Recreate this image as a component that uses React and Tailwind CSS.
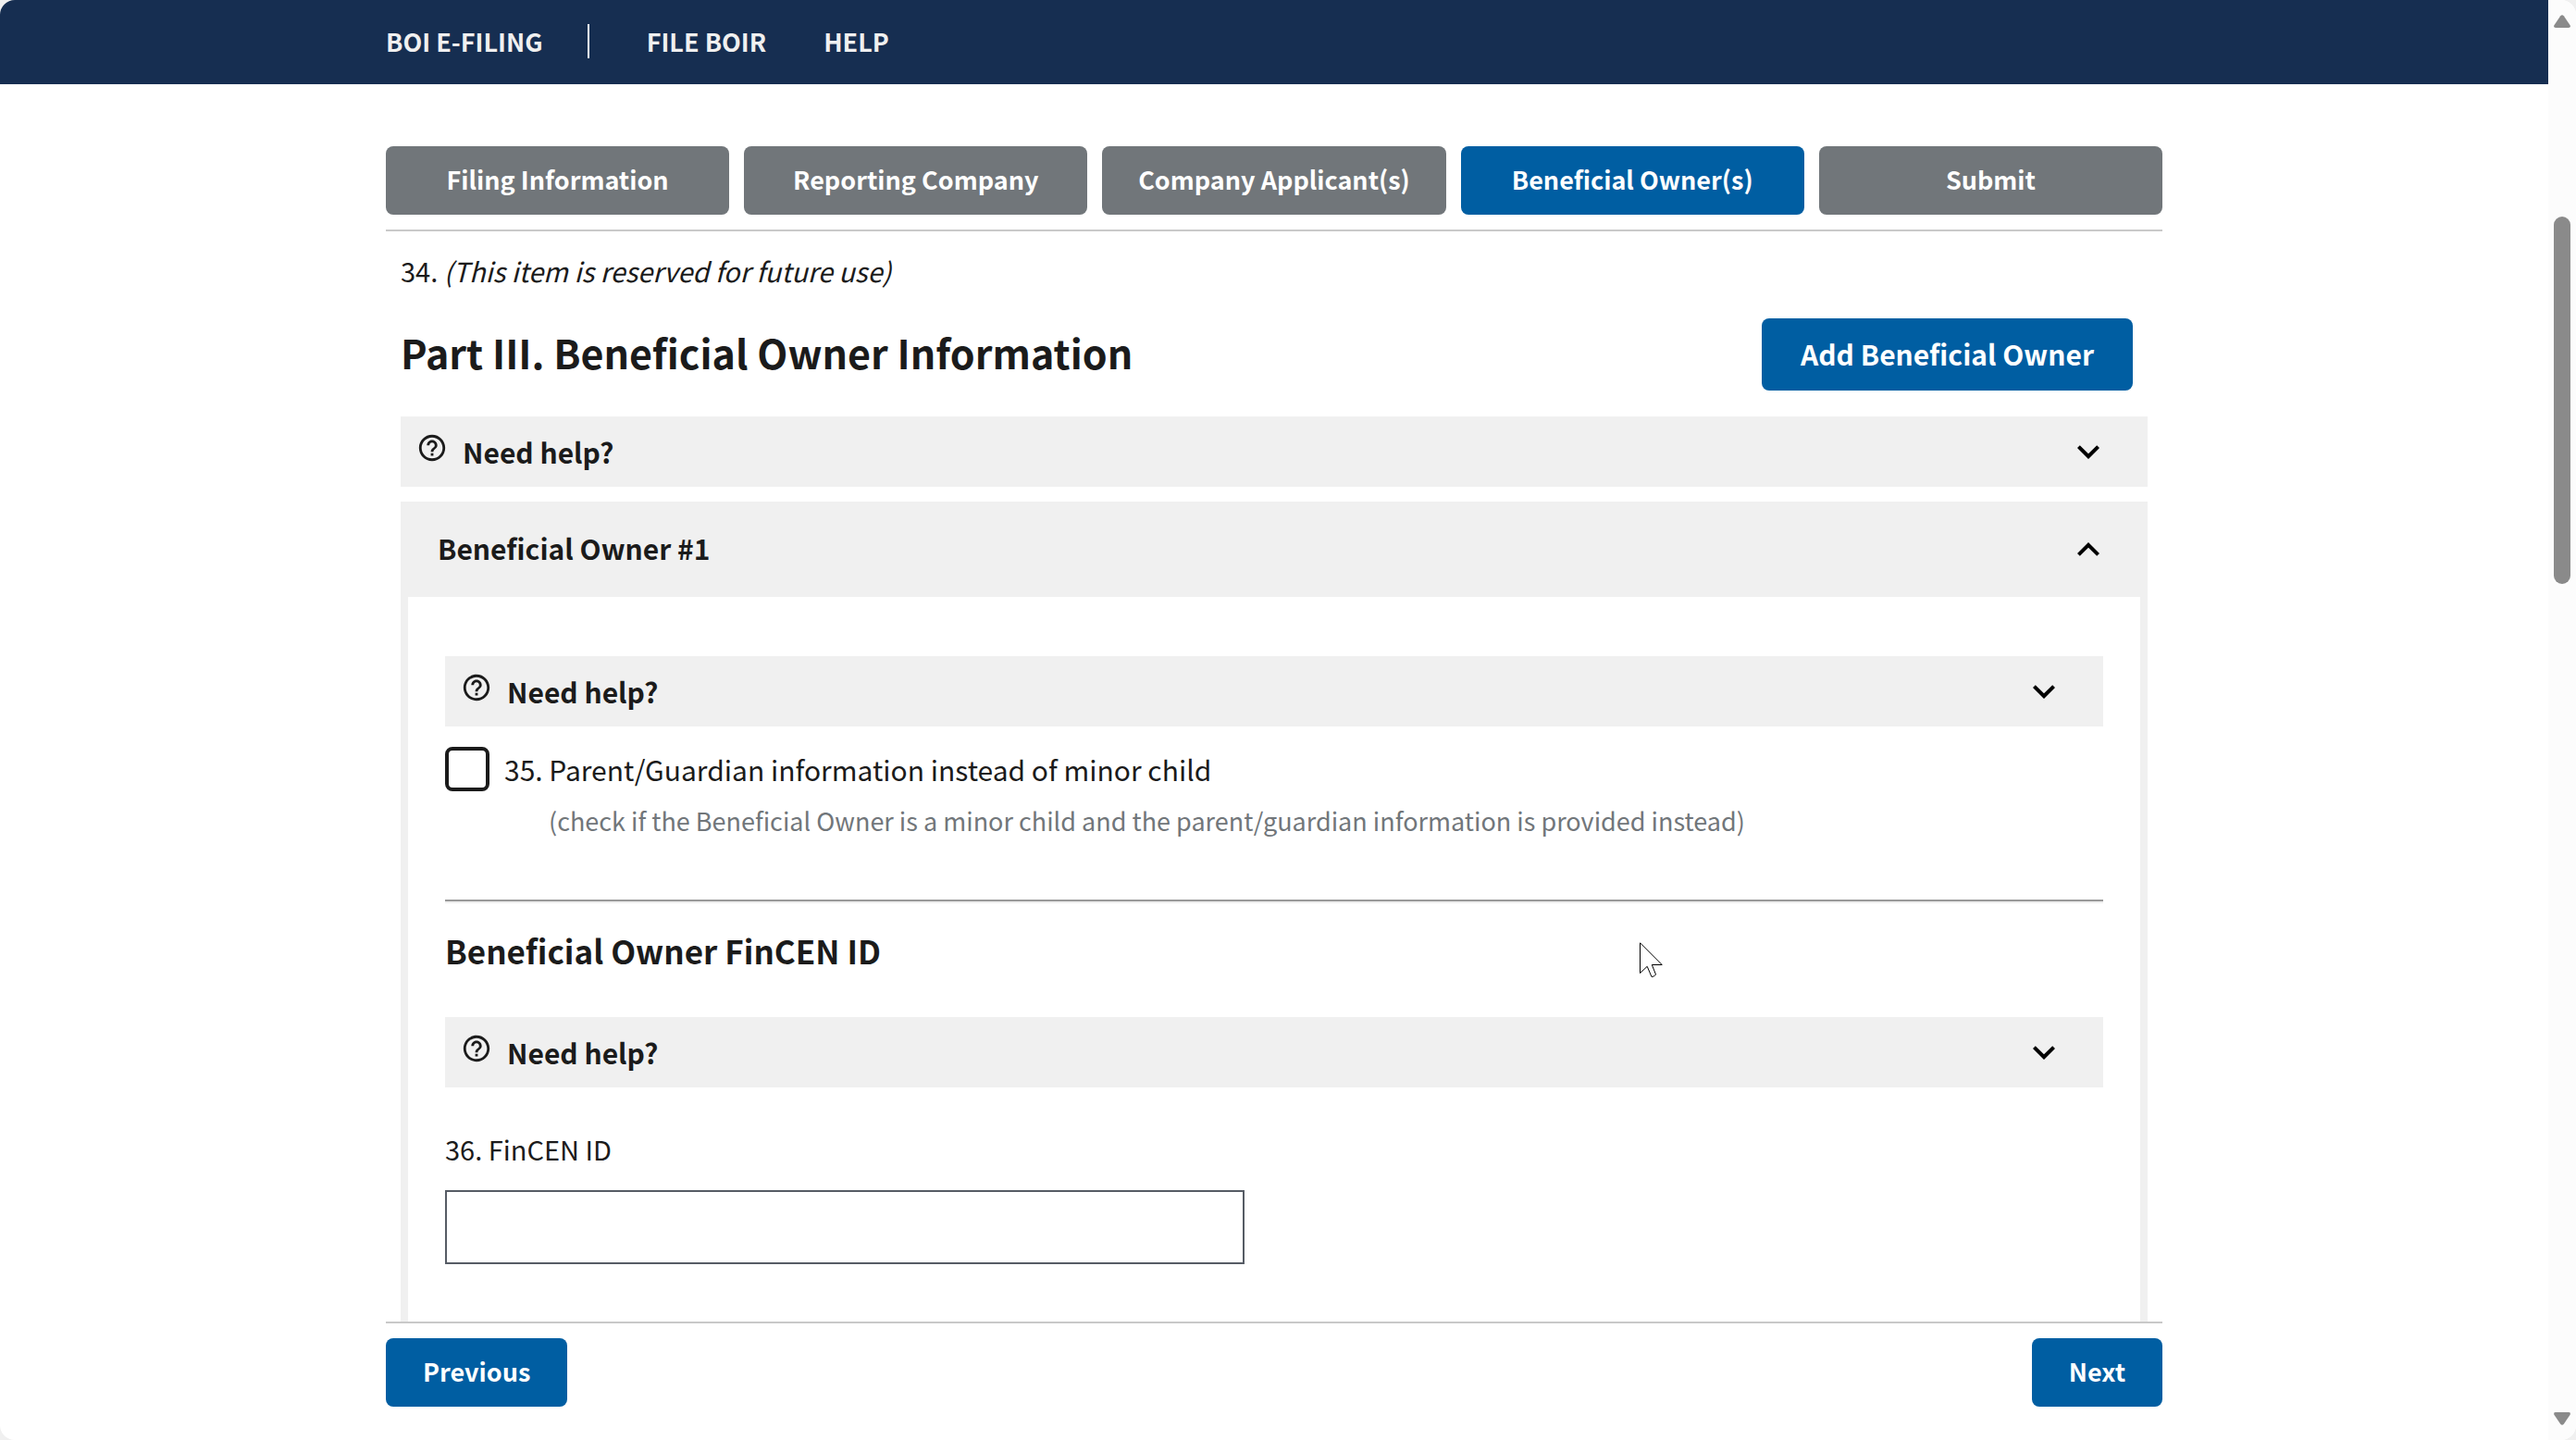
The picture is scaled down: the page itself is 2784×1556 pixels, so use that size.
import React, { useState } from 'react';
import { MdHelpOutline, MdExpandMore, MdExpandLess } from 'react-icons/md';

const steps = [
    'Filing Information',
    'Reporting Company',
    'Company Applicant(s)',
    'Beneficial Owner(s)',
    'Submit',
];

const NeedHelp = () => (
    <button type="button" className="flex h-[76px] w-full items-center gap-4 bg-[#f0f0f0] pl-[17px] pr-10 text-left">
        <MdHelpOutline className="mb-2 size-[34px] shrink-0" />
        <span className="flex-1 text-[30px] font-bold leading-10">Need help?</span>
        <MdExpandMore className="size-12 shrink-0 text-black" />
    </button>
);

const Header = () => (
    <header className="shrink-0 bg-[#162e51]">
        <nav className="mx-auto flex w-full max-w-[1920px] items-center pb-7 pt-[26px] text-[27px] font-bold leading-9 text-[#f0f0f0]">
            <a href="#home">BOI E-FILING</a>
            <span className="ml-12 h-[37px] w-0.5 bg-white" />
            <a href="#file" className="ml-[62px]">FILE BOIR</a>
            <a href="#help" className="ml-[62px]">HELP</a>
        </nav>
    </header>
);

const Scrollbar = () => (
    <div className="flex w-[30px] shrink-0 flex-col items-center bg-[#fcfcfc] py-4" aria-hidden="true">
        <svg className="h-3.5 w-[18px]" viewBox="0 0 18 14" fill="#8a8a8a">
            <path d="M7.2 1.2Q9-.9 10.8 1.2L17.6 11.2Q18.6 14 16 14H2Q-.6 14 .4 11.2Z" />
        </svg>
        <div className="mt-[204px] h-[397px] w-[18px] rounded-full bg-[#8a8a8a]" />
        <svg className="mt-auto h-3.5 w-[18px]" viewBox="0 0 18 14" fill="#8a8a8a">
            <path d="M7.2 12.8Q9 14.9 10.8 12.8L17.6 2.8Q18.6 0 16 0H2Q-.6 0 .4 2.8Z" />
        </svg>
    </div>
);

const App = () => {
    const [step, setStep] = useState(3);
    const [isMinor, setIsMinor] = useState(false);
    const [fincenId, setFincenId] = useState('');

    return (
        <div className="h-screen bg-[#f0f0f0]">
            <div className='relative flex h-full overflow-hidden rounded-2xl bg-white font-["Noto_Sans_CJK_JP",sans-serif] text-[#1b1b1b]'>
                <div className="flex min-w-0 flex-1 flex-col">
                    <Header />

                    <div className="mx-auto flex min-h-0 w-full max-w-[1920px] flex-1 flex-col">
                        <div className="mt-[67px] grid shrink-0 grid-cols-5 gap-4 border-b-2 border-[#c9c9c9] pb-4">
                            {steps.map((name, index) => (
                                <button
                                    key={name}
                                    type="button"
                                    onClick={() => setStep(index)}
                                    className={`h-[74px] rounded-lg pb-0.5 text-[27px] font-bold leading-9 text-white ${
                                        step === index ? 'bg-[#005ea2]' : 'bg-[#71767a]'
                                    }`}
                                >
                                    {name}
                                </button>
                            ))}
                        </div>

                        <main className="flex min-h-0 flex-1 flex-col overflow-hidden px-4">
                            <p className="mt-[22px] text-[29px] leading-10">
                                34. <em>(This item is reserved for future use)</em>
                            </p>
                            <div className="mt-8 flex shrink-0 items-center justify-between pr-4">
                                <h1 className="pb-1.5 text-[43px] font-bold leading-[60px]">Part III. Beneficial Owner Information</h1>
                                <button type="button" className="h-[78px] rounded-lg bg-[#005ea2] px-[42px] pb-0.5 text-[30px] font-bold leading-10 text-white">
                                    Add Beneficial Owner
                                </button>
                            </div>

                            <div className="mt-7 shrink-0">
                                <NeedHelp />
                            </div>

                            <section className="mt-4 flex flex-1 flex-col">
                                <button type="button" className="flex h-[103px] shrink-0 items-center justify-between bg-[#f0f0f0] px-10">
                                    <span className="pb-1 text-[30px] font-bold leading-10">Beneficial Owner #1</span>
                                    <MdExpandLess className="size-12 text-black" />
                                </button>
                                <div className="flex-1 border-x-8 border-[#f0f0f0] px-10 pt-16">
                                    <NeedHelp />

                                    <div className="mt-[22px] flex items-center gap-4">
                                        <input
                                            id="minor"
                                            type="checkbox"
                                            checked={isMinor}
                                            onChange={(e) => setIsMinor(e.target.checked)}
                                            className="size-12 shrink-0 appearance-none rounded-lg border-4 border-[#1b1b1b] bg-white checked:bg-[#005ea2]"
                                        />
                                        <label htmlFor="minor" className="text-[30px] leading-10">
                                            35. Parent/Guardian information instead of minor child
                                        </label>
                                    </div>
                                    <p className="mt-3 pl-28 text-[27px] leading-10 text-[#71767a]">
                                        (check if the Beneficial Owner is a minor child and the parent/guardian information is provided instead)
                                    </p>

                                    <hr className="mt-[65px] border-b-2 border-t-2 border-b-[#eeeeee] border-t-[#9a9a9a]" />

                                    <h2 className="mt-[27px] text-[35px] font-bold leading-[48px]">Beneficial Owner FinCEN ID</h2>
                                    <div className="mt-12">
                                        <NeedHelp />
                                    </div>

                                    <label htmlFor="fincen" className="mt-[46px] block text-[29px] leading-10">36. FinCEN ID</label>
                                    <input
                                        id="fincen"
                                        type="text"
                                        value={fincenId}
                                        onChange={(e) => setFincenId(e.target.value)}
                                        className="mt-[25px] block h-20 w-full max-w-[864px] border-2 border-[#565c65] px-4 text-[29px]"
                                    />
                                </div>
                            </section>
                        </main>

                        <footer className="flex shrink-0 justify-between border-t-2 border-[#c9c9c9] pb-9 pt-4">
                            <button type="button" className="h-[74px] rounded-lg bg-[#005ea2] px-10 pb-0.5 text-[27px] font-bold leading-9 text-white">
                                Previous
                            </button>
                            <button type="button" className="h-[74px] rounded-lg bg-[#005ea2] px-10 pb-0.5 text-[27px] font-bold leading-9 text-white">
                                Next
                            </button>
                        </footer>
                    </div>
                </div>

                <Scrollbar />

                {/* mouse pointer */}
                <svg className="pointer-events-none absolute left-[1772px] top-[1018px] h-[39px] w-[26px]" viewBox="0 0 26 39" fill="white" stroke="black" strokeWidth="1">
                    <path d="M.5.8V33.5L8.2 26.3L13 37.5Q16 37.5 17.5 35L13.3 24.5H24.2Z" />
                </svg>
            </div>
        </div>
    );
};

export default App;
